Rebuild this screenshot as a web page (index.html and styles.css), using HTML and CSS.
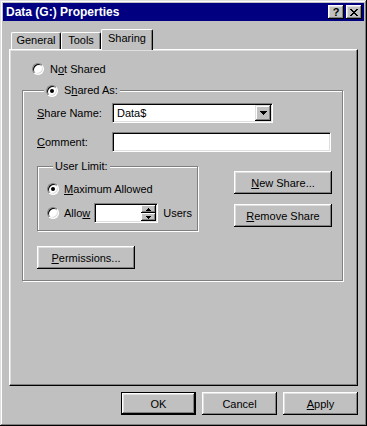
FILE: index.html
```html
<!DOCTYPE html>
<html>
  <head>
    <title>Data (G:) Properties</title>
    <link rel="stylesheet" href="styles.css">
  </head>
  <body>
    <div class="window">
      <div class="titlebar">
        <span class="title">Data (G:) Properties</span>
        <div class="title-buttons">
          <span class="tbtn help">?</span>
          <span class="tbtn">
            <svg width="8" height="7" viewBox="0 0 8 7"><path d="M0 0h2v1H0zM6 0h2v1H6zM1 1h2v1H1zM5 1h2v1H5zM2 2h4v1H2zM3 3h2v1H3zM2 4h4v1H2zM1 5h2v1H1zM5 5h2v1H5zM0 6h2v1H0zM6 6h2v1H6z" fill="#000"/></svg>
          </span>
        </div>
      </div>

      <div class="tabs">
        <div class="tab tab-general">General</div>
        <div class="tab tab-tools">Tools</div>
        <div class="tab tab-sharing active">Sharing</div>
      </div>

      <div class="panel">
        <div class="radio-row not-shared"><span class="radio"></span><span>N<u>o</u>t Shared</span></div>

        <fieldset class="share-group">
          <legend class="share-legend"><span class="radio checked"></span><span>S<u>h</u>ared As:</span></legend>

          <div class="field-row">
            <span class="field-label"><u>S</u>hare Name:</span>
            <div class="combo">
              <span class="combo-text">Data$</span>
              <span class="combo-btn">
                <svg width="7" height="4" viewBox="0 0 7 4"><path d="M0 0h7v1H0zM1 1h5v1H1zM2 2h3v1H2zM3 3h1v1H3z" fill="#000"/></svg>
              </span>
            </div>
          </div>

          <div class="field-row comment-row">
            <span class="field-label"><u>C</u>omment:</span>
            <div class="textbox comment-box"></div>
          </div>

          <div class="limit-row">
            <fieldset class="limit-group">
              <legend class="limit-legend">User Limit:</legend>
              <div class="radio-row max-row"><span class="radio checked"></span><span><u>M</u>aximum Allowed</span></div>
              <div class="allow-row">
                <span class="radio"></span>
                <span class="allow-label">Allo<u>w</u></span>
                <div class="spin">
                  <div class="spin-buttons">
                    <span class="spin-btn"><svg width="5" height="3" viewBox="0 0 5 3"><path d="M2 0h1v1H2zM1 1h3v1H1zM0 2h5v1H0z" fill="#000"/></svg></span>
                    <span class="spin-btn"><svg width="5" height="3" viewBox="0 0 5 3"><path d="M0 0h5v1H0zM1 1h3v1H1zM2 2h1v1H2z" fill="#000"/></svg></span>
                  </div>
                </div>
                <span class="users-label">Users</span>
              </div>
            </fieldset>

            <div class="share-buttons">
              <button class="btn wide-btn"><u>N</u>ew Share...</button>
              <button class="btn wide-btn"><u>R</u>emove Share</button>
            </div>
          </div>

          <button class="btn wide-btn perm-btn"><u>P</u>ermissions...</button>
        </fieldset>
      </div>

      <div class="dialog-buttons">
        <button class="btn dlg-btn default">OK</button>
        <button class="btn dlg-btn">Cancel</button>
        <button class="btn dlg-btn"><u>A</u>pply</button>
      </div>
    </div>
  </body>
</html>
```

FILE: styles.css
```css
body {
  margin: 0;
  font-family: "Liberation Sans", Arial, sans-serif;
  font-size: 11px;
  color: #000;
  background: #c0c0c0;
}

u {
  text-decoration: underline;
  text-underline-offset: 1px;
}

.window {
  width: 367px;
  height: 426px;
  box-sizing: border-box;
  padding: 3px;
  background: #c0c0c0;
  box-shadow: inset -1px -1px #000, inset 1px 1px #dfdfdf, inset -2px -2px #808080, inset 2px 2px #fff;
}

/* title bar */
.titlebar {
  height: 18px;
  background: #000080;
  display: flex;
  align-items: center;
  justify-content: space-between;
  padding: 0 2px 0 3px;
}

.title {
  color: #fff;
  font-weight: bold;
  font-size: 12px;
}

.title-buttons {
  display: flex;
  gap: 2px;
}

.tbtn {
  width: 16px;
  height: 14px;
  box-sizing: border-box;
  background: #c0c0c0;
  box-shadow: inset -1px -1px #000, inset 1px 1px #fff, inset -2px -2px #808080, inset 2px 2px #dfdfdf;
  display: flex;
  align-items: center;
  justify-content: center;
}

.help {
  font-weight: bold;
  font-size: 11px;
  line-height: 14px;
}

/* tabs */
.tabs {
  display: flex;
  align-items: flex-end;
  height: 20px;
  margin: 8px 6px 0;
  padding-left: 2px;
}

.tab {
  height: 17px;
  box-sizing: border-box;
  border-top: 1px solid #fff;
  border-left: 1px solid #fff;
  border-right: 1px solid #000;
  border-radius: 2px 2px 0 0;
  box-shadow: inset -1px 0 #808080;
  background: #c0c0c0;
  text-align: center;
  line-height: 15px;
}

.tab-general { width: 50px; }
.tab-tools { width: 40px; }

.tab-sharing {
  width: 52px;
}

.tab.active {
  height: 21px;
  margin-bottom: -1px;
  padding-top: 1px;
  position: relative;
  z-index: 1;
}

/* panel */
.panel {
  height: 337px;
  box-sizing: border-box;
  margin: 0 6px;
  border-top: 1px solid #fff;
  border-left: 1px solid #fff;
  border-right: 1px solid #000;
  border-bottom: 1px solid #000;
  box-shadow: inset -1px -1px #808080, inset 1px 1px #dfdfdf;
  padding: 12px 0 0 12px;
}

.radio-row {
  display: flex;
  align-items: center;
  gap: 6px;
  height: 13px;
}

.not-shared {
  margin-left: 10px;
}

.radio {
  width: 12px;
  height: 12px;
  box-sizing: border-box;
  border-radius: 50%;
  border: 1px solid;
  border-color: #808080 #fff #fff #808080;
  box-shadow: inset 1px 1px #000, inset -1px -1px #dfdfdf;
  background: #fff;
  display: flex;
  align-items: center;
  justify-content: center;
  flex: none;
}

.radio.checked::after {
  content: "";
  width: 4px;
  height: 4px;
  border-radius: 50%;
  background: #000;
}

/* group boxes */
fieldset {
  margin: 0;
  border: 1px solid #808080;
  box-shadow: inset 1px 1px #fff, 1px 1px #fff;
  min-width: 0;
}

legend {
  background: #c0c0c0;
  height: 13px;
  line-height: 13px;
  padding: 0 2px;
}

.share-group {
  width: 321px;
  box-sizing: border-box;
  margin-top: 9px;
  padding: 6px 10px 11px 14px;
}

.share-legend {
  display: flex;
  align-items: center;
  gap: 6px;
  margin-left: 7px;
}

.field-row {
  display: flex;
  align-items: center;
  height: 20px;
}

.comment-row {
  margin-top: 9px;
}

.field-label {
  width: 75px;
}

.textbox,
.combo,
.spin {
  height: 20px;
  box-sizing: border-box;
  background: #fff;
  border: 1px solid;
  border-color: #808080 #fff #fff #808080;
  box-shadow: inset 1px 1px #000, inset -1px -1px #dfdfdf;
}

.combo {
  width: 161px;
  display: flex;
  align-items: center;
  padding: 1px;
}

.combo-text {
  flex: 1;
  padding-left: 3px;
}

.combo-btn {
  width: 16px;
  height: 16px;
  box-sizing: border-box;
  background: #c0c0c0;
  box-shadow: inset -1px -1px #000, inset 1px 1px #dfdfdf, inset -2px -2px #808080, inset 2px 2px #fff;
  display: flex;
  align-items: center;
  justify-content: center;
}

.comment-box {
  width: 219px;
}

.limit-row {
  display: flex;
  justify-content: space-between;
  margin-top: 8px;
}

.limit-group {
  width: 161px;
  box-sizing: border-box;
  padding: 9px 4px 7px 9px;
}

.limit-legend {
  margin-left: 6px;
}

.max-row {
  gap: 5px;
}

.allow-row {
  display: flex;
  align-items: center;
  height: 20px;
  margin-top: 8px;
}

.allow-label {
  margin-left: 5px;
}

.spin {
  width: 64px;
  margin-left: 4px;
  display: flex;
  justify-content: flex-end;
  padding: 1px;
}

.spin-buttons {
  width: 15px;
  display: flex;
  flex-direction: column;
}

.spin-btn {
  flex: 1;
  background: #c0c0c0;
  box-shadow: inset -1px -1px #000, inset 1px 1px #fff, inset -2px -2px #808080;
  display: flex;
  align-items: center;
  justify-content: center;
}

.users-label {
  margin-left: 5px;
}

.share-buttons {
  display: flex;
  flex-direction: column;
  gap: 10px;
  margin-top: 11px;
}

/* buttons */
.btn {
  font: inherit;
  color: #000;
  height: 23px;
  padding: 0;
  border: 0;
  background: #c0c0c0;
  box-shadow: inset -1px -1px #000, inset 1px 1px #fff, inset -2px -2px #808080, inset 2px 2px #dfdfdf;
  text-align: center;
}

.wide-btn {
  width: 98px;
}

.perm-btn {
  display: block;
  margin-top: 15px;
}

.dialog-buttons {
  display: flex;
  justify-content: flex-end;
  gap: 6px;
  margin: 6px 6px 0;
}

.dlg-btn {
  width: 75px;
}

.btn.default {
  border: 1px solid #000;
  box-shadow: inset -1px -1px #000, inset 1px 1px #fff, inset -2px -2px #808080, inset 2px 2px #dfdfdf;
}
```
